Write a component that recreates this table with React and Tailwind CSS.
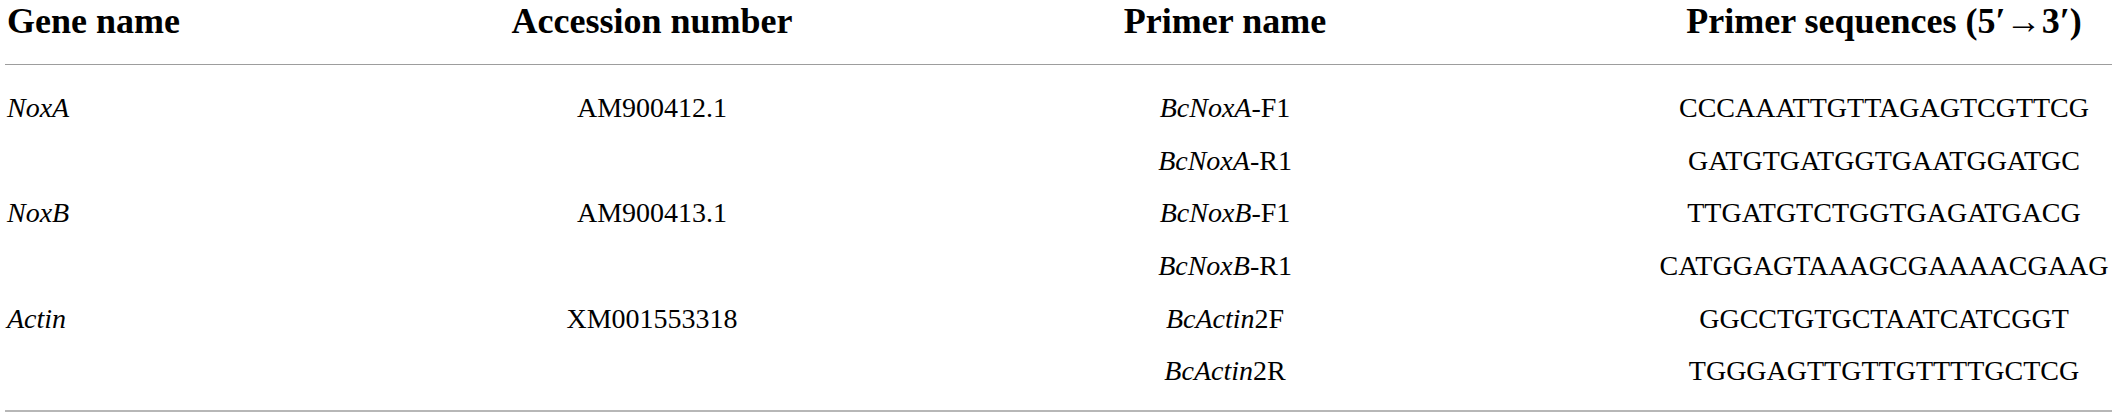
const rows = [
    { gene: "NoxA", acc: "AM900412.1", primer: ["BcNoxA", "-F1"], seq: "CCCAAATTGTTAGAGTCGTTCG" },
    { gene: "", acc: "", primer: ["BcNoxA", "-R1"], seq: "GATGTGATGGTGAATGGATGC" },
    { gene: "NoxB", acc: "AM900413.1", primer: ["BcNoxB", "-F1"], seq: "TTGATGTCTGGTGAGATGACG" },
    { gene: "", acc: "", primer: ["BcNoxB", "-R1"], seq: "CATGGAGTAAAGCGAAAACGAAG" },
    { gene: "Actin", acc: "XM001553318", primer: ["BcActin", "2F"], seq: "GGCCTGTGCTAATCATCGGT" },
    { gene: "", acc: "", primer: ["BcActin", "2R"], seq: "TGGGAGTTGTTGTTTTGCTCG" },
]

const cols = "grid grid-cols-[505px_284px_862px_456px]"

export default function App() {
    return (
        <div className="w-[2118px] h-[419px] bg-white text-black font-['Liberation_Serif',serif]">
            <div className="ml-[5px] w-[2107px]">

                <div className={`${cols} h-[65px] pt-[3px] text-[36px] leading-[36px] font-bold border-b border-[#9d9d9d]`}>
                    <div className="pl-[2px]">Gene name</div>
                    <div className="text-center">Accession number</div>
                    <div className="text-center">Primer name</div>
                    <div className="text-center">Primer sequences (5′→3′)</div>
                </div>

                <div className="pt-[17.25px] pb-[12.4px] border-b-2 border-[#b7b7b7] text-[28px]">
                    {rows.map((r, i) => (
                        <div key={i} className={`${cols} h-[52.6px] leading-[52.6px]`}>
                            <div className="pl-[2px] italic">{r.gene}</div>
                            <div className="text-center">{r.acc}</div>
                            <div className="text-center"><i>{r.primer[0]}</i>{r.primer[1]}</div>
                            <div className="text-center">{r.seq}</div>
                        </div>
                    ))}
                </div>

            </div>
        </div>
    )
}
